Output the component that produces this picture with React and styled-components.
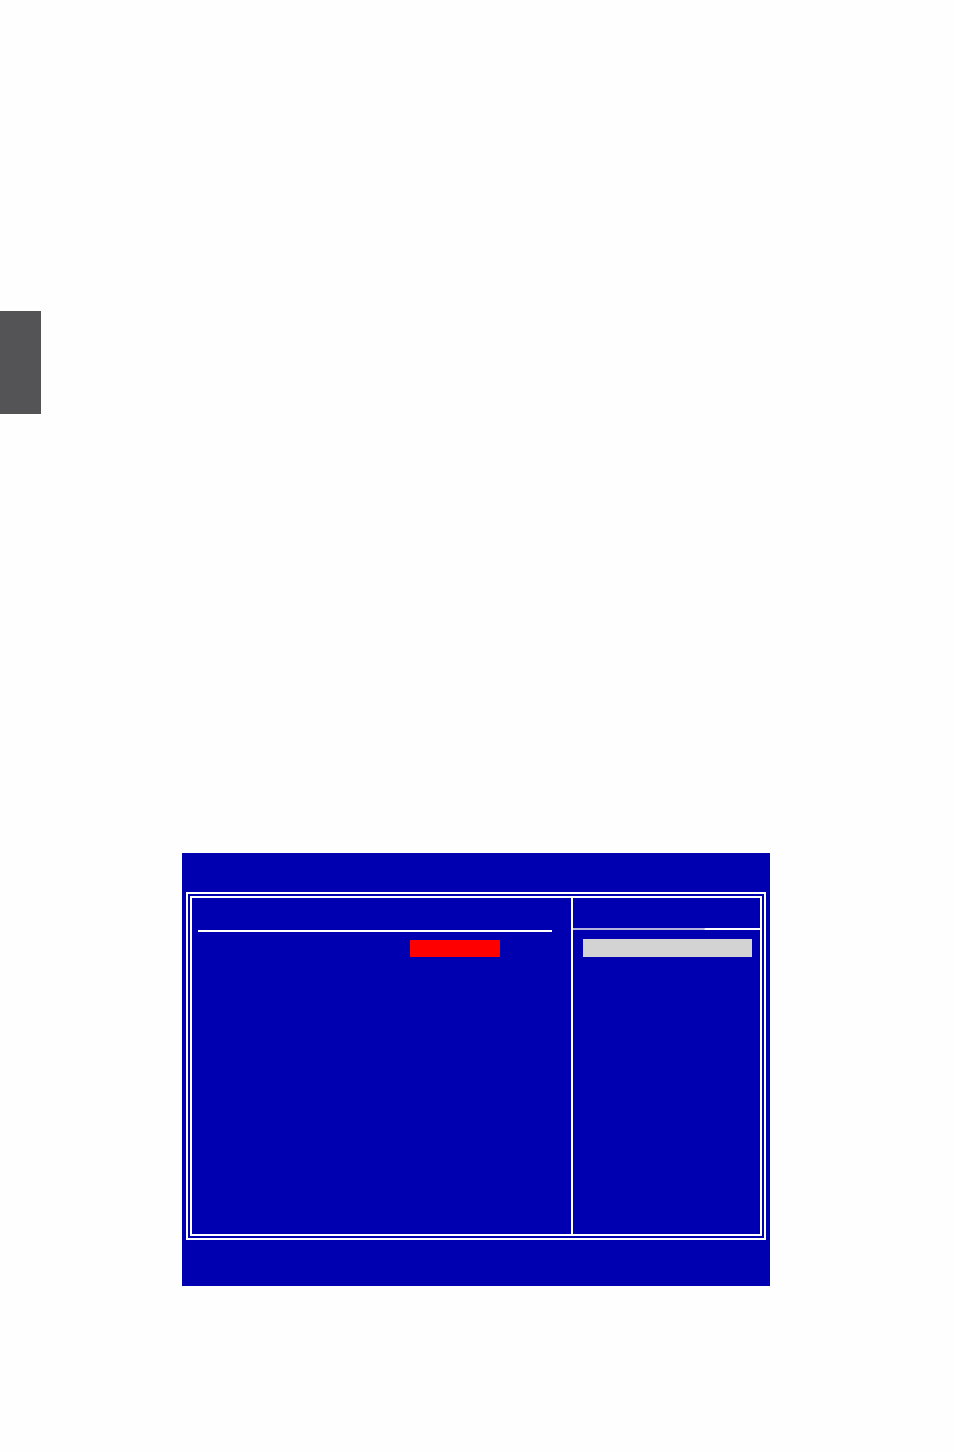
import styled, { createGlobalStyle } from "styled-components";

// Setup screen mock: a grey chapter tab and a blue two-pane BIOS frame

const GlobalStyle = createGlobalStyle`
    html, body {
        margin: 0;
        padding: 0;
        background: #ffffff;
        font-family: "Liberation Sans", Arial, sans-serif;
    }
`;

const Page = styled.div`
    width: 954px;
    height: 1452px;
    display: flex;
    flex-direction: column;
    background: #fefefe;
`;

const ChapterTab = styled.div`
    width: 41px;
    height: 103px;
    margin-top: 311px;
    background: #545456;
`;

const Screen = styled.div`
    width: 588px;
    height: 433px;
    margin: 439px 0 0 182px;
    box-sizing: border-box;
    padding: 39px 4px 0 4px;
    background: #0000b0;
`;

const OuterFrame = styled.div`
    height: 348px;
    box-sizing: border-box;
    border: 2px solid #ffffff;
    padding: 2px;
`;

const InnerFrame = styled.div`
    height: 100%;
    box-sizing: border-box;
    border: 2px solid #ffffff;
    display: grid;
    grid-template-columns: 379px 1fr;
`;

const Pane = styled.div`
    display: flex;
    flex-direction: column;
    border-left: ${(p) => (p.$divided ? "2px solid #ffffff" : "none")};
`;

const PaneHeader = styled.div`
    height: ${(p) => p.$height}px;
    flex-shrink: 0;
`;

const Rule = styled.div`
    height: 2px;
    width: ${(p) => p.$width};
    margin-left: ${(p) => p.$inset}px;
    background: ${(p) => p.$fade
        ? "linear-gradient(90deg, #b4b4dc 0%, #b4b4dc 70%, #ffffff 71%, #ffffff 100%)"
        : "#ffffff"};
`;

const Highlight = styled.div`
    width: ${(p) => p.$width}px;
    height: ${(p) => p.$height}px;
    margin: ${(p) => p.$top}px 0 0 ${(p) => p.$left}px;
    background: ${(p) => p.$color};
`;

const App = () => {
    return (
        <>
            <GlobalStyle />
            <Page>
                <ChapterTab />
                <Screen>
                    <OuterFrame>
                        <InnerFrame>
                            <Pane>
                                <PaneHeader $height={32} />
                                <Rule $width="354px" $inset={6} />
                                <Highlight $width={90} $height={17} $top={8} $left={218} $color="#ff0000" />
                            </Pane>
                            <Pane $divided>
                                <PaneHeader $height={30} />
                                <Rule $width="100%" $inset={0} $fade />
                                <Highlight $width={169} $height={18} $top={9} $left={10} $color="#d3d3d3" />
                            </Pane>
                        </InnerFrame>
                    </OuterFrame>
                </Screen>
            </Page>
        </>
    );
};

export default App;
